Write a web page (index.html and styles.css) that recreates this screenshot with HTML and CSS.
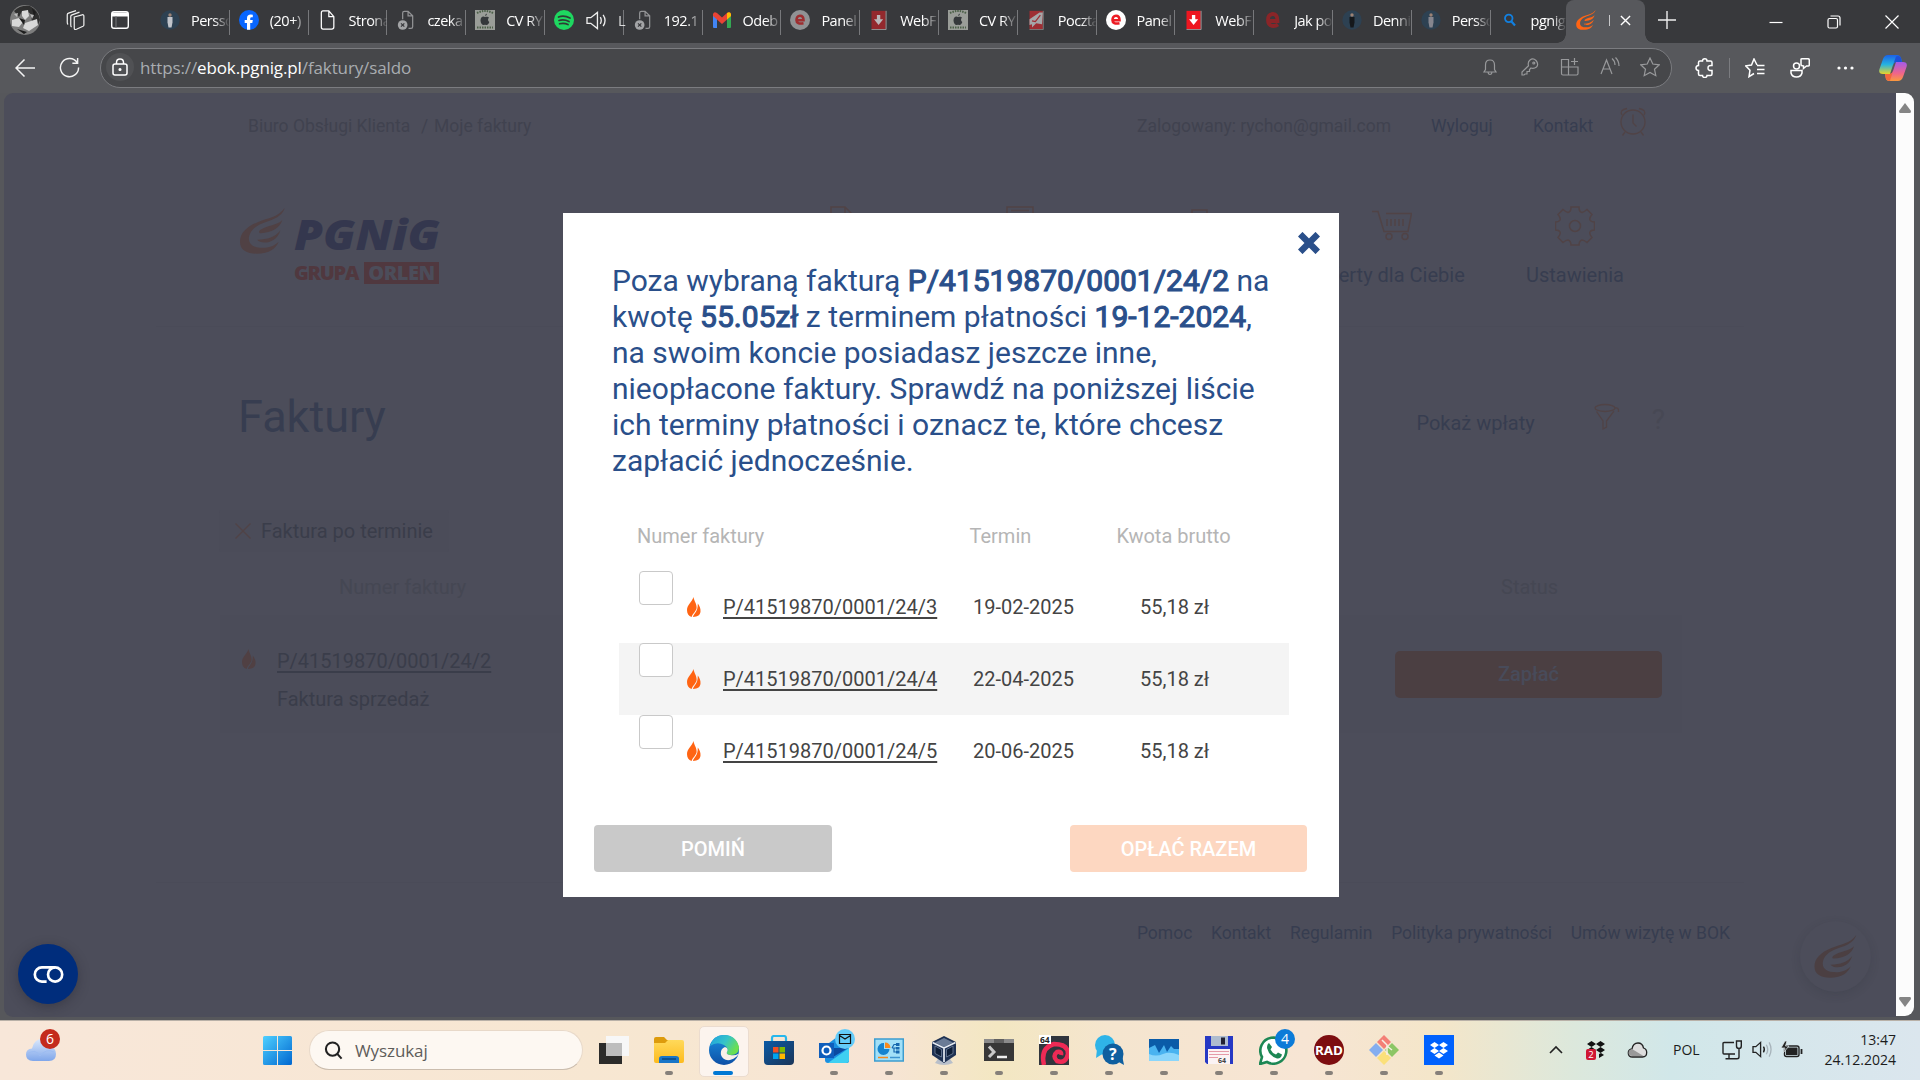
FILE: index.html
```html
<!DOCTYPE html>
<html lang="pl">
<head>
<meta charset="utf-8">
<title>PGNiG eBOK - Faktury</title>
<link rel="stylesheet" href="styles.css">
</head>
<body>
<svg class="defs" width="0" height="0">
  <defs>
    <linearGradient id="gWin" x1="0" y1="0" x2="1" y2="1"><stop offset="0" stop-color="#4fd0ff"/><stop offset="1" stop-color="#0067d0"/></linearGradient>
    <linearGradient id="gEdge" x1="0" y1="0" x2="1" y2="0.5"><stop offset="0" stop-color="#1f9fe0"/><stop offset=".55" stop-color="#35c3c9"/><stop offset="1" stop-color="#6be04f"/></linearGradient>
    <linearGradient id="gEdge2" x1="0" y1="0" x2="0" y2="1"><stop offset="0" stop-color="#1b8fe0"/><stop offset="1" stop-color="#0d4fa5"/></linearGradient>
    <linearGradient id="gFold" x1="0" y1="0" x2="0" y2="1"><stop offset="0" stop-color="#ffd95a"/><stop offset="1" stop-color="#fdbb1e"/></linearGradient>
    <linearGradient id="gCopA" x1="0" y1="0" x2="0" y2="1"><stop offset="0" stop-color="#1b62e8"/><stop offset=".5" stop-color="#25b3e0"/><stop offset="1" stop-color="#e8d32a"/></linearGradient>
    <linearGradient id="gCopB" x1="0" y1="0" x2="0" y2="1"><stop offset="0" stop-color="#a25bea"/><stop offset=".6" stop-color="#f0658a"/><stop offset="1" stop-color="#fb9a3c"/></linearGradient>
    <linearGradient id="gCloud" x1="0" y1="0" x2="0" y2="1"><stop offset="0" stop-color="#dbe8fb"/><stop offset="1" stop-color="#7fa6ea"/></linearGradient>
    <linearGradient id="gStore" x1="0" y1="0" x2="1" y2="1"><stop offset="0" stop-color="#0b5aa5"/><stop offset="1" stop-color="#1b3558"/></linearGradient>
    <symbol id="wing" viewBox="0 0 136 139"><path d="M135 0C115 28 85 30 55 42C20 56 0 76 0 102C0 128 22 138 50 138C90 138 108 122 117 102C100 118 80 122 60 120C35 118 25 104 27 88C32 62 55 50 85 40C115 30 130 18 135 0Z"/><path d="M128 36C110 54 85 50 62 66C56 70 56 77 63 76C95 74 120 62 128 36Z"/><path d="M122 68C105 88 85 95 52 96C62 110 110 110 122 68Z"/></symbol>
    <symbol id="drop" viewBox="0 0 14 20"><path d="M6.500 0C7 4 10 7 9.600 11C9.400 14 6 16 4.600 20C1.500 19 0 16.500 0 13C0 8 5 5 6.500 0Z"/><path d="M10.800 6.500C12.500 9 13.800 11 13.500 14.500C13.200 18 11 19.800 6 20C6.500 16.500 11 15.500 10.800 6.500Z"/></symbol>
    <symbol id="blocked" viewBox="0 0 20 24"><path d="M6 11V3.500Q6 1.500 8 1.500H12.500L18 7V20Q18 22 16 22H13M12.500 1.500V7H18" fill="none" stroke="#929395" stroke-width="1.500"/><circle cx="6" cy="18" r="5.800" fill="#a3a4a6"/><path d="M4 16L8 20M8 16L4 20" stroke="#393a3d" stroke-width="1.500"/></symbol>
    <symbol id="apple" viewBox="0 0 20 20"><path fill="#9a9d98" d="M0 0H20V20H0Z"/><path d="M2 3Q10-1 18 3M2 17.500H18" stroke="#4c6048" stroke-width="2" stroke-dasharray="1.500 1" fill="none"/><path d="M10 7C8 5.500 5.500 7 5.500 10.500C5.500 13 7.500 15.500 9 15C10 14.600 10 14.600 11 15C12.500 15.500 14 13.500 14.300 12C12.500 11 12.800 8.500 14 7.800C13 6.300 11.500 6.500 10 7ZM10 6Q10 4 12 3.500Q12 5.500 10 6Z" fill="#35383b"/></symbol>
    <symbol id="download" viewBox="0 0 20 24"><path fill="currentColor" d="M1 1H18V23H1Z"/><path d="M18.500 1V23.500H1" stroke="#aaa" fill="none"/><path d="M7.500 6H11.500V11H15L9.500 18L4 11H7.500Z" fill="var(--ar)"/></symbol>
    <symbol id="person" viewBox="0 0 20 20"><circle cx="10" cy="10" r="9.700" fill="#2d4152"/><circle cx="10" cy="5" r="1.700" fill="#9b8275"/><path d="M7.500 7H12.500V12.500L11.500 17.500H8.500L7.500 12.500Z" fill="var(--ps)"/></symbol>
  </defs>
</svg>
<div class="desktop">
  <header class="tabstrip">
    <svg class="avatar" viewBox="0 0 30 30"><circle cx="15" cy="15" r="15" fill="#7d7d7d"/><path d="M4 6Q10 0 20 1Q29 6 30 15L28 20L22 16L20 8L12 6L9 12Z" fill="#2f2f2f"/><path d="M12 6L18 5L19 11L15 15L12 11ZM2 15L9 13L13 17L9 22L2 21ZM15 18L27 14L28 20L19 26L13 23Z" fill="#d8d8d8"/><path d="M9 13L15 15L14 20ZM7 24L17 27L14 29ZM22 3L26 7L24 12Z" fill="#1d1d1d"/><path d="M20 9L24 10L22 14ZM4 9L8 8L7 12Z" fill="#bbb"/></svg>
    <svg class="workspaces" viewBox="0 0 22 24" fill="none" stroke="#eee" stroke-width="1.400"><path d="M9 8L18 5.500Q20 5 20 7V17Q20 18 19 18.500L11.500 22Q9 23 9 20.500Z"/><path d="M6 19.500Q5 19 5 17V7.500Q5 6 6.500 5.500L15 2.500M2 16.500Q1 16 1 14V5.500Q1 4 2.500 3.500L11 .8"/></svg>
    <svg class="vtabs" viewBox="0 0 18 18"><path d="M3 .7H15Q17.300 .7 17.300 3V15Q17.300 17.300 15 17.300H3Q.7 17.300 .7 15V3Q.7 .7 3 .7Z" fill="none" stroke="#fff" stroke-width="1.400"/><path d="M1 1.500H17V5.500H1Z" fill="#fff"/><path d="M5 5V17" stroke="#77787b"/></svg>
    <nav class="tabs">
      <div class="tab"><svg class="fav" style="--ps:#c0c4cb"><use href="#person"/></svg><span>Persso</span></div>
      <div class="tab"><svg class="fav" viewBox="0 0 20 20"><circle cx="10" cy="10" r="10" fill="#0866ff"/><path d="M8 19.800V13H5.700V10H8V8Q8 4.500 11.800 4.500L13.800 4.700V7.300H12.600Q11.200 7.300 11.200 8.600V10H13.800L13.300 13H11.200V19.800Z" fill="#fff"/></svg><span>(20+)</span></div>
      <div class="tab"><svg class="fav" viewBox="0 0 20 24"><path d="M4 1H11L17 8V20.500Q17 23 14.500 23H4Q2 23 2 20.500V3.500Q2 1 4 1ZM11 1V8H17" fill="none" stroke="#fff" stroke-width="1.500"/></svg><span>Strona</span></div>
      <div class="tab"><svg class="fav"><use href="#blocked"/></svg><span>czeka</span></div>
      <div class="tab"><svg class="fav"><use href="#apple"/></svg><span>CV RY</span></div>
      <div class="tab"><svg class="fav" viewBox="0 0 20 20"><circle cx="10" cy="10" r="10" fill="#1ed760"/><path d="M4.500 7Q10 5 16 8M5 10.500Q10 9 15 11.500M5.500 13.800Q10 12.500 14 14.500" stroke="#2e3b34" stroke-width="1.700" fill="none" stroke-linecap="round"/></svg><svg class="speaker" viewBox="0 0 22 20" fill="none" stroke="#eee" stroke-width="1.400"><path d="M1 7H5L12 1.500V18.500L5 13H1ZM15 6.500Q17 10 15 13.500M18 4Q22 10 18 16"/></svg><span>L</span></div>
      <div class="tab"><svg class="fav"><use href="#blocked"/></svg><span>192.1</span></div>
      <div class="tab"><svg class="fav" viewBox="0 0 20 20"><path d="M1 4H5V18H2Q1 18 1 17Z" fill="#4285f4"/><path d="M15 4H19V17Q19 18 18 18H15Z" fill="#34a853"/><path d="M1 4Q2 1 5 3L10 7.500L15 3Q18 1 19 4L19 6L10 14L1 6Z" fill="#ea4335"/><path d="M15 3Q18 1 19 4V6L15 9.500Z" fill="#fbbc04"/></svg><span>Odeb</span></div>
      <div class="tab"><svg class="fav" viewBox="0 0 20 20"><circle cx="10" cy="10" r="10" fill="#919294"/><path d="M6.500 10.300H13.500Q13.500 5.800 10 5.800Q6.500 5.800 6.500 10.300Q6.500 14.500 13.500 13.300" fill="none" stroke="#9e2e30" stroke-width="2.600"/></svg><span>Panel</span></div>
      <div class="tab"><svg class="fav red-dim"><use href="#download"/></svg><span>WebF</span></div>
      <div class="tab"><svg class="fav"><use href="#apple"/></svg><span>CV RY</span></div>
      <div class="tab"><svg class="fav" viewBox="0 0 20 24"><path d="M1 1H17V23H1Z" fill="#9e2e33"/><path d="M17.500 1V23.500H1" stroke="#888" fill="none"/><path d="M1 11L13 3H17L16 17L9 16L4 21V17L1 18Z" fill="#a5a6a8"/><path d="M4 13L8 14L14 6" stroke="#9e2e33" stroke-width="1.500" fill="none"/></svg><span>Poczta</span></div>
      <div class="tab"><svg class="fav" viewBox="0 0 20 20"><circle cx="10" cy="10" r="10" fill="#fff"/><path d="M6.500 10.300H13.500Q13.500 5.800 10 5.800Q6.500 5.800 6.500 10.300Q6.500 14.500 13.500 13.300" fill="none" stroke="#ed1c24" stroke-width="2.600"/></svg><span>Panel</span></div>
      <div class="tab"><svg class="fav red"><use href="#download"/></svg><span>WebF</span></div>
      <div class="tab"><svg class="fav" viewBox="0 0 20 20"><path d="M5 11H14.500Q14.500 4 10 4Q5 4 5 10Q5 16 10.500 16Q13 16 15 14.500" fill="none" stroke="#8a2528" stroke-width="3.800"/></svg><span>Jak po</span></div>
      <div class="tab"><svg class="fav" style="--ps:#15181b"><use href="#person"/></svg><span>Denni</span></div>
      <div class="tab"><svg class="fav" style="--ps:#85868f"><use href="#person"/></svg><span>Persso</span></div>
      <div class="tab tab--last"><svg class="fav" viewBox="0 0 20 24" fill="none" stroke="#1280e0"><circle cx="8.500" cy="10" r="4.500" stroke-width="2.200"/><path d="M11.500 13.500L16 18.500" stroke-width="2.600"/></svg><span>pgnig</span></div>
      <div class="tab tab--active"><svg class="fav orange"><use href="#wing"/></svg><b></b><svg class="tabx" viewBox="0 0 12 12" stroke="#fff" stroke-width="1.500"><path d="M1 1L11 11M11 1L1 11"/></svg></div>
    </nav>
    <svg class="plus" viewBox="0 0 18 18" stroke="#eee" stroke-width="1.400"><path d="M9 0V18M0 9H18"/></svg>
    <div class="winbtns">
      <svg viewBox="0 0 14 14" fill="none" stroke="#fff" stroke-width="1.200"><path d="M.5 7.500H13.500"/></svg>
      <svg viewBox="0 0 14 14" fill="none" stroke="#fff" stroke-width="1.200"><path d="M1 5Q1 3.500 2.500 3.500H9Q10.500 3.500 10.500 5V11.500Q10.500 13 9 13H2.500Q1 13 1 11.500ZM3.500 1H11Q13 1 13 3V10.500"/></svg>
      <svg viewBox="0 0 14 14" fill="none" stroke="#fff" stroke-width="1.200"><path d="M.5 .5L13.500 13.500M13.500 .5L.5 13.500"/></svg>
    </div>
  </header>

  <div class="toolbar">
    <svg class="back" viewBox="0 0 20 18" fill="none" stroke="#f4f4f4" stroke-width="1.500"><path d="M20 9H1M9.500 .5L1 9L9.500 17.500"/></svg>
    <svg class="reload" viewBox="0 0 22 22" fill="none" stroke="#f4f4f4" stroke-width="1.500"><path d="M19 6A9.500 9.500 0 1 0 20.500 11M19.500 1V6.500H14"/></svg>
    <div class="urlbar">
      <div class="lock"><svg viewBox="0 0 16 18" fill="none" stroke="#fff" stroke-width="1.500"><rect x="1" y="6" width="14" height="11" rx="2"/><path d="M4.500 6V4.500Q4.500 1 8 1Q11.500 1 11.500 4.500V6"/><circle cx="8" cy="11.500" r=".8" fill="#fff"/></svg></div>
      <div class="url">https://<b>ebok.pgnig.pl</b>/faktury/saldo</div>
      <div class="urlicons">
        <svg viewBox="0 0 20 20"><path d="M4 15H16L14.500 12.500V8Q14.500 3 10 3Q5.500 3 5.500 8V12.500ZM8 15.500Q8.500 17.500 10 17.500Q11.500 17.500 12 15.500"/></svg>
        <svg viewBox="0 0 20 20"><path d="M2 18V15L8.500 8.800Q7.500 5 10 3Q13 .5 16 3.500Q19 7 16.500 10Q14 12 11 11L9.500 12.500V14.500H7V17H5L4 18Z"/><circle cx="13.800" cy="6" r="1"/></svg>
        <svg viewBox="0 0 20 20"><path d="M1.500 2.500H8.500V18H3Q1.500 18 1.500 16.500ZM1.500 10H18V16.500Q18 18 16.500 18H8.500M14.500 1V8M11 4.500H18"/></svg>
        <svg viewBox="0 0 20 20"><path d="M1 17L6.500 3L12 17M3 12H10M12 1.500Q15 4 15 8M15.500 .5Q19 4 19 9"/></svg>
        <svg viewBox="0 0 20 20"><path d="M10 1L12.800 7L19.300 7.800L14.500 12.200L15.800 18.700L10 15.500L4.200 18.700L5.500 12.200L.7 7.800L7.200 7Z"/></svg>
      </div>
    </div>
    <svg class="tool ext" viewBox="0 0 20 20"><path d="M7.500 3Q7.500 .8 9.800 .8Q12 .8 12 3H15.500Q17 3 17 4.500V7.500Q13 7 13 10Q13 13 17 12.500V16Q17 17.500 15.500 17.500H12Q12 19.500 9.800 19.500Q7.500 19.500 7.500 17.500H5Q3.500 17.500 3.500 16V12.500Q1 12.300 1 10Q1 7.700 3.500 7.500V4.500Q3.500 3 5 3Z"/></svg>
    <i class="vsep"></i>
    <svg class="tool favs" viewBox="0 0 20 20"><path d="M12 7L9 1L6.500 7L.7 7.800L5 12.200L4 18.700L9 15.500M12 7.500H19.500M12 11.500H19.500M12 15.500H19.500"/></svg>
    <svg class="tool ppl" viewBox="0 0 20 20"><circle cx="6.500" cy="8" r="3"/><path d="M1 12.500H12V15Q11 19 6.500 19Q2 19 1 15ZM11 1.500Q11 .8 12 .8H18Q19.300 .8 19.300 2V7Q19.300 8 18 8H16.500L13.500 10.500V8Q11 8 11 6.500Z"/></svg>
    <svg class="dots" viewBox="0 0 20 20"><circle cx="2" cy="10" r="1.600"/><circle cx="8.500" cy="10" r="1.600"/><circle cx="15" cy="10" r="1.600"/></svg>
    <svg class="copilot" viewBox="0 0 28 26"><path d="M9 0H18Q21 0 22 3L23 7H17Q15 7 14 10L11 19H4Q-1 19 .5 14L4 4Q5.500 0 9 0Z" fill="url(#gCopA)"/><path d="M19 26H10Q7 26 6.500 22L6 19H11Q13 19 14 16L17 7H24Q29 7 27.500 12L24 22Q22.500 26 19 26Z" fill="url(#gCopB)"/><path d="M14 10L17 1.500Q21 0 22 3L23 7H17Q15 7 14 10Z" fill="#1c50d8"/><path d="M14 16L11 25.800Q7 26 6.500 22L6 19H11Q13 19 14 16Z" fill="#f2663c"/></svg>
  </div>

  <div class="view">
    <main class="page">
      <div class="topbar">
        <span class="crumb1">Biuro Obsługi Klienta</span><span class="crumbsep">/</span><span>Moje faktury</span>
        <span class="user">Zalogowany: rychon@gmail.com</span>
        <a class="logout">Wyloguj</a><a class="contact">Kontakt</a>
        <svg class="clock" viewBox="0 0 28 30"><circle cx="14" cy="15" r="12"/><path d="M14 7.500V16L17.500 19.500M3 8Q0 3 8 1.500M25 8Q28 3 20 1.500M6 25L3.500 28.500M22 25L24.500 28.500"/></svg>
      </div>
      <div class="header">
        <div class="logo">
          <svg class="logowing"><use href="#wing"/></svg>
          <div class="logotext"><svg class="pgnig" viewBox="0 0 150 53"><text x="1" y="40.500" textLength="146" lengthAdjust="spacingAndGlyphs">PGNiG</text></svg><div class="grupa"><span>GRUPA</span><b>ORLEN</b></div></div>
        </div>
        <nav class="mainnav">
          <a><svg viewBox="0 0 40 40"><path d="M11 1H25L33 9V38H11ZM25 1V9H33"/></svg></a>
          <a><svg viewBox="0 0 40 40"><path d="M7 1H33V38H7ZM11 4.500H29"/></svg></a>
          <a><svg viewBox="0 0 40 40"><path d="M12 4H27V38H12Z"/></svg></a>
          <a><svg viewBox="0 0 40 40"><path d="M0 5.500H6L12 25.500H36L39.500 7.500H14M15 13V20M19 13V20M23 13V20M27 13V20M31 13V20"/><circle cx="17" cy="30.500" r="3"/><circle cx="33" cy="30.500" r="3"/></svg><span>Oferty dla Ciebie</span></a>
          <a><svg viewBox="0 0 40 40"><path d="M16 1H24Q24 6 27 6.500Q29 6 32 3.500L37 8.500Q34 12 35 14Q36 16 39.500 16V24Q36 24 35 26Q34 28 37 31.500L32 36.500Q29 34 27 34Q24 35 24 39H16Q16 35 13 34Q11 34 8 36.500L3 31.500Q6 28 5 26Q4 24 .5 24V16Q4 16 5 14Q6 12 3 8.500L8 3.500Q11 6 13 6.500Q16 6 16 1Z"/><circle cx="20" cy="20" r="5.500"/></svg><span>Ustawienia</span></a>
        </nav>
      </div>
      <div class="titlebar">
        <h1>Faktury</h1>
        <a class="payments">Pokaż wpłaty</a>
        <svg class="funnel" viewBox="0 0 26 28"><ellipse cx="11" cy="5" rx="10" ry="3.500"/><path d="M2.500 8.500L9 18V26L12.500 24V18L20 8M21 5Q25 4 24.500 9"/></svg>
        <span class="help">?</span>
      </div>
      <div class="chip"><svg viewBox="0 0 16 16"><path d="M.5 .5L15.500 15.500M15.500 .5L.5 15.500"/></svg>Faktura po terminie</div>
      <div class="listhead"><span>Numer faktury</span><span>Status</span></div>
      <div class="listrow">
        <svg class="dimdrop"><use href="#drop"/></svg>
        <div class="inv"><u>P/41519870/0001/24/2</u><span>Faktura sprzedaż</span></div>
        <div class="pay">Zapłać</div>
      </div>
      <footer><a>Pomoc</a><a>Kontakt</a><a>Regulamin</a><a>Polityka prywatności</a><a>Umów wizytę w BOK</a></footer>

      <div class="chat"><svg><use href="#wing"/></svg></div>
      <div class="cookie"><svg viewBox="0 0 32 18" fill="none" stroke="#fff" stroke-width="2.800"><path d="M14 16.500H9A7.500 7.500 0 0 1 9 1.500H23"/><circle cx="23" cy="9" r="7.500"/></svg></div>

      <section class="modal">
        <svg class="close" viewBox="0 0 22 22"><path d="M4.500 4.500L17.500 17.500M17.500 4.500L4.500 17.500" stroke="#2a4f8a" stroke-width="6.500" stroke-linecap="square"/></svg>
        <p class="msg">Poza wybraną fakturą <b>P/41519870/0001/24/2</b> na<br>kwotę <b>55.05zł</b> z terminem płatności <b>19-12-2024</b>,<br>na swoim koncie posiadasz jeszcze inne,<br>nieopłacone faktury. Sprawdź na poniższej liście<br>ich terminy płatności i oznacz te, które chcesz<br>zapłacić jednocześnie.</p>
        <div class="thead"><span>Numer faktury</span><span>Termin</span><span>Kwota brutto</span></div>
        <div class="trow"><i class="box"></i><svg><use href="#drop"/></svg><u>P/41519870/0001/24/3</u><span>19-02-2025</span><span>55,18 zł</span></div>
        <div class="trow trow--alt"><i class="box"></i><svg><use href="#drop"/></svg><u>P/41519870/0001/24/4</u><span>22-04-2025</span><span>55,18 zł</span></div>
        <div class="trow"><i class="box"></i><svg><use href="#drop"/></svg><u>P/41519870/0001/24/5</u><span>20-06-2025</span><span>55,18 zł</span></div>
        <div class="actions"><div class="btn skip">POMIŃ</div><div class="btn payall">OPŁAĆ RAZEM</div></div>
      </section>
    </main>
    <div class="scrollbar"><svg viewBox="0 0 12 10"><path d="M6 0L12 8Q12 10 11 10H1Q0 10 0 8Z"/></svg><svg viewBox="0 0 12 10"><path d="M6 10L12 2Q12 0 11 0H1Q0 0 0 2Z"/></svg></div>
  </div>

  <div class="taskbar">
    <div class="weather"><svg viewBox="0 0 30 24"><path d="M7 23Q0 23 0 16.500Q0 11 6 10.500Q8 1 16 1Q23 1 24.500 9Q30 10 30 16Q30 23 23 23Z" fill="url(#gCloud)"/><path d="M1 16Q10 10 14 18Q20 10 28 14" stroke="#9cbcf2" fill="none"/></svg><em>6</em></div>
    <svg class="start" viewBox="0 0 29 29" fill="url(#gWin)"><path d="M1.500 0H14V14H0V1.500Q0 0 1.500 0ZM15 0H27.500Q29 0 29 1.500V14H15ZM0 15H14V29H1.500Q0 29 0 27.500ZM15 15H29V27.500Q29 29 27.500 29H15Z"/></svg>
    <div class="search"><svg viewBox="0 0 20 20" fill="none" stroke="#222" stroke-width="2.200"><circle cx="9" cy="8.500" r="7"/><path d="M14 13.500L18.500 18.500"/></svg><span>Wyszukaj</span></div>
    <div class="apps">
      <div class="app"><svg viewBox="0 0 30 30"><path d="M0 8H23V29H0Z" fill="#2b2b2a"/><path d="M7 1H30V21H7Z" fill="#f7f7f7"/><path d="M7 8H23V21H7Z" fill="#bdbdbd"/></svg></div>
      <div class="app run"><svg viewBox="0 0 30 30"><path d="M0 4Q0 2 2 2H10L13 5H28V12H0Z" fill="#dd9b0c"/><path d="M0 8H11L14 5H28Q30 5 30 7V26Q30 28 28 28H2Q0 28 0 26Z" fill="url(#gFold)"/><path d="M5 28V23.500Q5 21 8 21H22Q25 21 25 23.500V28Z" fill="#1976c8"/><path d="M8 24H22" stroke="#0d5394" stroke-width="2"/></svg></div>
      <div class="app active"><svg viewBox="0 0 30 30"><circle cx="15" cy="15" r="15" fill="url(#gEdge2)"/><path d="M1 11Q4 0 15 0Q27 0 30 12Q30 20 22 20Q17 20 18 17Q20 13 15 10Q8 6 1 11Z" fill="url(#gEdge)"/><path d="M18 17Q20 13 16 12Q11 14 12 20Q14 26 21 25Q25 24 27 22Q31 18 29 19Q26 21 21 20Q17 19.500 18 17Z" fill="#f9f0e8"/></svg></div>
      <div class="app"><svg viewBox="0 0 30 30"><path d="M8 8V3Q8 1 10 1H20Q22 1 22 3V8" fill="none" stroke="#27b7ec" stroke-width="2.200"/><path d="M0 6H30V26Q30 30 26 30H4Q0 30 0 26Z" fill="url(#gStore)"/><path d="M9 12H14.500V17.500H9Z" fill="#f25022"/><path d="M15.500 12H21V17.500H15.500Z" fill="#7fba00"/><path d="M9 18.500H14.500V24H9Z" fill="#00a4ef"/><path d="M15.500 18.500H21V24H15.500Z" fill="#ffb900"/></svg></div>
      <div class="app run"><svg viewBox="0 0 30 30"><path d="M6 11L18 2L30 11V26Q30 28 27 28H9Q6 28 6 25Z" fill="#1b8fe0"/><path d="M9 28L30 13V25Q30 28 27 28Z" fill="#3fd0f2"/><path d="M14 13H29L14 22Z" fill="#0b4aa0"/><path d="M0 8H15V23H0Z" fill="#0f5dbb"/><circle cx="7.500" cy="15.500" r="4" fill="none" stroke="#fff" stroke-width="2.200"/></svg><svg class="badge" viewBox="0 0 20 20"><circle cx="10" cy="10" r="10" fill="#63cbf9"/><path d="M4.500 5.500H15.500V14.500H4.500ZM4.500 6.500L10 10L15.500 6.500" fill="none" stroke="#111" stroke-width="1.200"/></svg></div>
      <div class="app run"><svg viewBox="0 0 30 30"><path d="M.7 4H29.300V26H.7Z" fill="#a2e0f8" stroke="#3c9ccf" stroke-width="1.500"/><path d="M10 8A6 6 0 1 0 15.500 14H10Z" fill="#1583cf"/><path d="M11 7.500Q16 7.500 16.500 13H11Z" fill="#f78a1d"/><path d="M18 13L20 9.500H22M18 13H22M20 13V17H22" stroke="#1768b0" stroke-width="1.200" fill="none"/><path d="M22 8H25.500V11H22ZM22 12H25.500V14.500H22ZM22 15.500H25.500V18.500H22Z" fill="#1768b0"/><path d="M4 22.500H14" stroke="#f78a1d" stroke-width="1.500"/><path d="M16 22.500H26" stroke="#3d94d0" stroke-width="1.500"/></svg></div>
      <div class="app run"><svg viewBox="0 0 30 30"><path d="M9 24H21L24 28Q15 32 6 28Z" fill="#b8bfca"/><path d="M15 1L27 7V20L15 28L3 20V7Z" fill="#1e3153"/><path d="M15 3L24 7.500L15 12L6 7.500Z" fill="#6a7b96"/><path d="M3.500 7.500L15 13V27M15 13L26.500 7.500" stroke="#e5eaf2" stroke-width="1.700" fill="none"/><path d="M6 11L12.500 14.500V22L6 18.500ZM24 11L17.500 14.500V22L24 18.500Z" fill="#0e1e38" stroke="#8090aa" stroke-width=".7"/></svg></div>
      <div class="app run"><svg viewBox="0 0 30 30"><path d="M0 4H30V26H0Z" fill="#373737"/><path d="M0 4H30V8H0Z" fill="#8b8b8b"/><path d="M10 4H20V8H10Z" fill="#606060"/><path d="M5 11.500L10 17L5 22" stroke="#c9c9c9" stroke-width="3" fill="none"/><path d="M13 22H23" stroke="#eee" stroke-width="2.500"/></svg></div>
      <div class="app run"><svg viewBox="0 0 30 30"><path d="M0 1H30V30H0Z" fill="#30353d"/><path d="M5 30Q1 13 15 9Q29 9 29 19Q27 29 18 26Q13 21 18 17Q23 16 22 20" fill="none" stroke="#ee2a55" stroke-width="4.500"/><path d="M0 0H12V9H0Z" fill="#fff"/><text x="1" y="8" font-size="8.500" font-weight="700" fill="#222">64</text></svg></div>
      <div class="app run"><svg viewBox="0 0 30 30"><circle cx="11" cy="10" r="10" fill="#2fb4e8"/><path d="M3 14L2 23L10 18Z" fill="#2fb4e8"/><circle cx="19" cy="19" r="10.500" fill="#0f5f9f"/><path d="M23 26L30 30L28 20Z" fill="#0f5f9f"/><text x="15" y="24.500" font-size="16" font-weight="700" fill="#fff">?</text></svg></div>
      <div class="app run"><svg viewBox="0 0 30 30"><path d="M0 4H30V26H0Z" fill="#0a5ba8"/><path d="M0 13L6 10L10 18L15 10L18 17L22 11L25 14H30V26H0Z" fill="#49b3f0"/><path d="M0 19Q7 22 14 19T30 20V26H0Z" fill="#8bd6fb"/></svg></div>
      <div class="app run"><svg viewBox="0 0 30 30"><path d="M1 1H29V29H3L1 27Z" fill="#2638c4"/><path d="M7 1H24V11H7Z" fill="#aebccf"/><path d="M17 2.500H21V9.500H17Z" fill="#223"/><path d="M4 14H26V29H4Z" fill="#fbf3f4"/><path d="M5 16.500H25M5 19.500H25M5 22.500H14" stroke="#e59aa8"/><text x="14" y="27.500" font-size="7" font-weight="700" fill="#444">64</text></svg></div>
      <div class="app run"><svg viewBox="0 0 30 30"><path d="M1 29L3 22A13 13 0 1 1 8 27Z" fill="#fff" stroke="#1c8754" stroke-width="2.600"/><path d="M10 8L13 12L11.500 14.500Q13 18 17 19.500L19 17.500L23 19.500Q22 24 18 23.500Q10 21 8 13Q8 9 10 8Z" fill="#1c8754"/></svg><svg class="badge" viewBox="0 0 20 20"><circle cx="10" cy="10" r="10" fill="#0b7bd8"/><text x="6" y="15" font-size="14" fill="#fff">4</text></svg></div>
      <div class="app run"><svg viewBox="0 0 30 30"><circle cx="15" cy="15" r="15" fill="#7d0d10"/><text x="1" y="20" font-size="13" font-weight="700" fill="#fff" textLength="28" lengthAdjust="spacingAndGlyphs">RAD</text></svg></div>
      <div class="app run"><svg viewBox="0 0 30 30"><path d="M15 0L22 7L15 14L8 7Z" fill="#f47f76"/><path d="M7 8L14 15L7 22L0 15Z" fill="#84aef0"/><path d="M23 8L30 15L23 22L16 15Z" fill="#8cc665"/><path d="M15 16L22 23L15 30L8 23Z" fill="#fbe07a"/><path d="M13 5L18 10V20M18 11L23 15" stroke="#f7efe3" stroke-width="1.500" fill="none"/></svg></div>
      <div class="app run"><svg viewBox="0 0 30 30"><path d="M0 0H30V30H0Z" fill="#0061fe"/><path d="M10.500 7L15 10L10.500 13L6 10ZM19.500 7L24 10L19.500 13L15 10ZM10.500 13L15 16L10.500 19L6 16ZM19.500 13L24 16L19.500 19L15 16ZM15 17.500L19.500 20.500L15 23.500L10.500 20.500Z" fill="#fff"/></svg></div>
    </div>
    <div class="tray">
      <svg class="chev" viewBox="0 0 14 10" fill="none" stroke="#222" stroke-width="1.600"><path d="M1 8L7 2L13 8"/></svg>
      <svg class="dbx" viewBox="0 0 20 20"><path d="M5.500 1L10 4L5.500 7L1 4ZM14.500 1L19 4L14.500 7L10 4ZM5.500 7L10 10L5.500 13L1 10ZM14.500 7L19 10L14.500 13L10 10ZM15 13L18 15L13 18V14Z" fill="#111"/><rect y="9" width="10" height="11" rx="2" fill="#d01734"/><text x="2.300" y="18" font-size="9.500" fill="#fff">2</text></svg>
      <svg class="od" viewBox="0 0 20 16"><path d="M5 15Q.8 15 .8 11Q.8 7.500 4.500 7Q5.500 1 10.500 1Q15 1 16 6Q19.200 7 19.200 10.500Q19.200 15 15 15Z" fill="#ddd" stroke="#222" stroke-width="1.300"/><path d="M4.500 7L16 14H5Q1 14 1 11Q1 7.500 4.500 7Z" fill="#999"/></svg>
      <span class="lang">POL</span>
      <svg class="net" viewBox="0 0 20 20" fill="none" stroke="#222" stroke-width="1.400"><path d="M12 2.500H2Q1 2.500 1 3.500V13Q1 14 2 14H13M7 14V18.500M3.500 18.800H15Q17 18.800 17 17V9M14.500 1H19.300V6Q19.300 8.500 17 8.500Q14.500 8.500 14.500 6Z"/></svg>
      <svg class="vol" viewBox="0 0 22 20" fill="none" stroke="#222" stroke-width="1.400"><path d="M1 7H4L9 2.500V17.500L4 13H1ZM12 7Q14 10 12 13"/><path d="M15 5Q18 10 15 15M18 2.500Q22 10 18 17.500" stroke="#a8b4bb"/></svg>
      <svg class="bat" viewBox="0 0 22 18"><rect x="3.500" y="5" width="14.500" height="10.500" rx="2" fill="none" stroke="#222" stroke-width="1.400"/><path d="M5 6.500H16.500V14H5Z" fill="#222"/><path d="M20.500 8V13" stroke="#222" stroke-width="1.800"/><path d="M4 0L0 7H4L2 12L8 5H4.500L6 0Z" fill="#222" stroke="#dce6e8" stroke-width=".8"/></svg>
      <div class="time"><span>13:47</span><span>24.12.2024</span></div>
    </div>
  </div>
</div>
</body>
</html>
```
FILE: styles.css
```css
* { box-sizing: border-box; }
body { margin: 0; overflow: hidden; font-family: "Open Sans", "Noto Sans", sans-serif; }
svg { display: block; flex: none; }
.defs { position: absolute; }
.desktop { width: 1920px; height: 1080px; display: flex; flex-direction: column; background: #56575b; }

/* tab strip */
.tabstrip { height: 43px; flex: none; background: #38393c; display: flex; align-items: center; }
.avatar { width: 30px; height: 30px; margin: -3px 0 0 10px; }
.workspaces { width: 22px; height: 21px; margin: -2px 0 0 25px; }
.vtabs { width: 18px; height: 18px; margin: -3px 0 0 24px; }
.tabs { display: flex; height: 43px; margin-left: 22px; }
.tab { width: 78.8px; display: flex; align-items: center; padding: 0 0 3px 9px; color: #fff; font-size: 14.500px; letter-spacing: -0.5px; white-space: nowrap; background: linear-gradient(#77787b, #77787b) right 10px / 1px 25px no-repeat; }
.tab span { width: 38px; margin-left: 11px; -webkit-mask-image: linear-gradient(90deg, #000 60%, transparent 102%); mask-image: linear-gradient(90deg, #000 60%, transparent 102%); }
.tab .speaker + span { width: 8px; -webkit-mask-image: none; mask-image: none; opacity: .8; }
.fav { width: 20px; height: 20px; }
.speaker { width: 21px; height: 19px; margin-left: 12px; }
.red-dim { color: #93292d; --ar: #b9b9bb; }
.red { color: #ee1620; --ar: #fff; }
.orange { fill: #ff6413; }
.tab--last { width: 75.6px; background: none; }
.tab--active { width: 79px; background: #57585c; border-radius: 8px 8px 0 0; position: relative; padding-left: 10px; }
.tab--active::before, .tab--active::after { content: ""; position: absolute; bottom: 0; width: 9px; height: 9px; }
.tab--active::before { left: -9px; background: radial-gradient(circle at 0 0, transparent 8.500px, #57585c 9px); }
.tab--active::after { right: -9px; background: radial-gradient(circle at 100% 0, transparent 8.500px, #57585c 9px); }
.tab--active b { width: 1px; height: 11px; background: #c8c8ca; margin: 0 10px 0 13px; }
.tabx { width: 11px; height: 11px; margin-top: 1px; }
.plus { width: 18px; height: 18px; margin: -4px 0 0 13px; }
.winbtns { display: flex; gap: 44px; margin-left: 93px; }
.winbtns svg { width: 14px; height: 14px; }

/* address bar */
.toolbar { height: 50px; flex: none; display: flex; align-items: center; background: #57585c; }
.back { width: 20px; height: 18px; margin-left: 15px; margin-top: -1px; }
.reload { width: 21px; height: 21px; margin-left: 24px; margin-top: -1px; }
.urlbar { width: 1572px; height: 40px; margin-left: 20px; border: 1px solid #7b7c80; border-radius: 20px; background: #46474a; display: flex; align-items: center; padding: 0 11px 2px 5px; }
.lock { width: 28px; height: 28px; border-radius: 50%; background: #505154; display: flex; align-items: center; justify-content: center; }
.lock svg { width: 16px; height: 18px; }
.url { margin-left: 6px; font-size: 17px; letter-spacing: -.12px; color: #a9adb1; white-space: nowrap; }
.url b { font-weight: 400; color: #fff; }
.urlicons { display: flex; gap: 20px; margin-left: auto; }
.urlicons svg { width: 20px; height: 20px; fill: none; stroke: #98999b; stroke-width: 1.200; }
.tool { width: 20px; height: 20px; fill: none; stroke: #fff; stroke-width: 1.500; }
.ext { margin-left: 23px; }
.vsep { width: 1px; height: 20px; background: #7b7c80; margin: 0 15px 0 14px; }
.ppl { margin-left: 25px; }
.dots { width: 20px; height: 20px; margin-left: 27px; fill: #fff; }
.copilot { width: 28px; height: 26px; margin-left: 22px; }

/* page */
.view { height: 924px; flex: none; display: flex; padding-left: 4px; padding-right: 6px; }
.page { flex: 1; position: relative; background: #4c4d5a; border-radius: 9px 0 0 9px; font-family: Roboto, sans-serif; font-size: 20px; color: #3a3d4a; white-space: nowrap; }
.topbar { height: 66px; display: flex; align-items: center; padding-left: 244px; font-size: 17.500px; color: #40424f; }
.crumb1 { width: 173px; }
.crumbsep { width: 13px; }
.user { margin-left: auto; margin-right: 40px; }
.logout, .contact, .payments, footer a, .mainnav span { color: #373d50; }
.logout { width: 102px; }
.contact { width: 86px; }
.clock { width: 28px; height: 30px; margin: -9px 249px 0 0; }
.clock, .mainnav svg, .funnel, .chip svg { fill: none; stroke: #504346; stroke-width: 1.300; }
.header { height: 168px; margin: 0 152px; border-bottom: 1px solid #4a4b58; display: flex; padding: 47px 79px 0 84px; }
.logo { display: flex; height: 80px; }
.logowing { width: 45px; height: 46px; fill: #504144; margin-top: 2px; }
.logotext { margin-left: 8px; }
.pgnig { width: 150px; height: 53px; margin-top: 3px; margin-right: -4px; fill: #34374e; font: italic 800 43px "Open Sans", sans-serif; }
.grupa { display: flex; align-items: center; height: 22px; margin-left: 1px; font: 800 20px/22px "Open Sans", sans-serif; color: #50383f; }
.grupa span { width: 70px; letter-spacing: -1.300px; }
.grupa b { width: 75px; height: 22px; background: #50383f; color: #4c4d5a; text-align: center; font-weight: 800; letter-spacing: -.5px; }
.mainnav { display: flex; margin-left: auto; }
.mainnav a { display: flex; flex-direction: column; align-items: center; width: 180px; }
.mainnav a:nth-child(4) { width: 187px; margin-left: 8px; }
.mainnav svg { width: 40px; height: 40px; stroke-width: 1.500; }
.mainnav span { margin-top: 17px; line-height: 24px; }
.titlebar { height: 93px; margin-top: 43px; display: flex; align-items: center; padding-left: 234px; }
h1 { margin: 0; font-weight: 400; font-size: 45px; color: #373d50; }
.payments { margin-left: auto; margin-top: 12px; }
.funnel { width: 26px; height: 28px; margin-left: 59px; }
.help { margin: 6px 231px 0 32px; font-size: 28px; color: #474854; }
.chip { width: 230px; height: 42px; margin: 47px 0 0 215px; padding-left: 16px; display: flex; align-items: center; gap: 10px; border-radius: 3px; background: #4b4c59; }
.chip svg { width: 16px; height: 16px; }
.listhead { height: 63px; padding: 23px 0 0 335px; line-height: 24px; display: flex; color: #454753; }
.listhead span:first-child { width: 1162px; }
.listrow { height: 118px; margin: 0 214px 0 216px; background: #4b4c59; display: flex; align-items: flex-start; padding: 1px 20px 0 22px; }
.dimdrop { width: 14px; height: 20px; fill: #504043; margin-top: 33px; }
.inv { display: flex; flex-direction: column; margin: 26px 0 0 21px; line-height: 38px; }
u { text-underline-offset: 3px; text-decoration-thickness: 2px; }
.pay { width: 267px; height: 47px; margin: 35px 0 0 auto; background: #4b3f42; border-radius: 5px; color: #484b5a; font-weight: 500; line-height: 47px; text-align: center; }
footer { margin: 149px 152px 0; border-top: 1px solid #4a4b58; padding: 39px 14px 0 0; display: flex; justify-content: flex-end; gap: 18.700px; font-size: 17.500px; line-height: 22px; }
.chat { position: absolute; left: 1796px; top: 828px; width: 71px; height: 71px; border-radius: 50%; background: #4c4d5a; box-shadow: 0 3px 10px rgba(40, 41, 52, .16); display: flex; align-items: center; justify-content: center; }
.chat svg { width: 43px; height: 43px; fill: #4b3f42; }
.cookie { position: absolute; left: 14px; top: 851px; width: 60px; height: 60px; border-radius: 50%; background: #002d7c; box-shadow: 0 3px 12px rgba(30, 30, 40, .35); display: flex; align-items: center; justify-content: center; }
.cookie svg { width: 31px; height: 17px; }

/* modal */
.modal { position: absolute; left: 559px; top: 120px; width: 776px; height: 684px; background: #fff; padding: 50px 32px 25px 31px; color: #444; }
.close { position: absolute; left: 735px; top: 19px; width: 22px; height: 22px; }
.msg { margin: 0 0 45px 18px; font-size: 30px; line-height: 36px; color: #2a4f8a; }
.msg b { font-weight: 400; -webkit-text-stroke: 1.100px #2a4f8a; }
.thead { display: flex; height: 47px; line-height: 24px; padding-left: 43px; color: #b5b5b5; }
.thead span:nth-child(1) { width: 332.500px; }
.thead span:nth-child(2) { width: 147px; }
.trow { height: 72px; width: 670px; margin-left: 25px; padding-left: 20px; display: flex; align-items: flex-start; line-height: 73px; }
.trow--alt { background: #f4f4f4; }
.box { width: 34px; height: 34px; border: 1px solid #c9c9c9; border-radius: 4px; background: #fff; }
.trow svg { width: 14px; height: 20px; margin: 26px 22px 0 14px; fill: #ff6413; }
.trow u { width: 250px; flex: none; }
.trow u + span { width: 167px; flex: none; }
.actions { display: flex; justify-content: space-between; margin-top: 38px; }
.btn { width: 238px; height: 47px; border-radius: 4px; color: #fff; font-weight: 500; line-height: 48px; text-align: center; }
.skip { background: #c9c9c9; }
.payall { width: 237px; background: #fdd7c1; }

.scrollbar { width: 18px; height: 923px; background: #fcfcfc; border-radius: 0 9px 9px 0; display: flex; flex-direction: column; justify-content: space-between; align-items: center; padding: 10px 0 9px; }
.scrollbar svg { width: 12px; height: 10px; fill: #858585; }

/* taskbar */
.taskbar { height: 60px; margin-top: 3px; flex: none; border-top: 1px solid #b9b1a8; display: flex; align-items: center; position: relative; background: linear-gradient(90deg, #f8e7d9 0, #f7e7d1 35%, #f7e4d5 46%, #f3e7c2 52%, #f5e5cf 58%, #f7e5d4 68%, #f4e6c9 75%, #dce8dc 82%, #d1e7e9 87%, #dbe6ee 100%); }
.weather { width: 30px; height: 24px; margin: -2px 0 0 26px; position: relative; }
.weather svg { width: 30px; height: 24px; }
.weather em { position: absolute; left: 14px; top: -9px; width: 20px; height: 20px; border-radius: 50%; background: #c42b1c; color: #fff; font: 14px/20px "Open Sans", sans-serif; text-align: center; }
.start { width: 29px; height: 29px; margin-left: 207px; }
.search { width: 274px; height: 40px; margin: -1px 0 0 17px; border-radius: 20px; background: #fdf8f2; border: 1px solid #e8d9c9; border-bottom-color: #cbbdae; display: flex; align-items: center; padding-left: 14px; font-size: 17px; letter-spacing: -.1px; color: #5f5d5a; }
.search svg { width: 19px; height: 19px; margin-right: 12px; }
.apps { display: flex; margin: -2px 0 0 3px; }
.app { width: 55px; height: 59px; display: flex; justify-content: center; align-items: center; position: relative; }
.app > svg:first-child { width: 30px; height: 30px; position: relative; z-index: 1; font-family: "Open Sans", sans-serif; }
.app .badge { position: absolute; left: 29px; top: 9px; width: 20px; height: 20px; z-index: 2; }
.run::after { content: ""; position: absolute; left: 24px; bottom: 4px; width: 8px; height: 4px; border-radius: 2px; background: #86807a; }
.active::before { content: ""; position: absolute; left: 3px; top: 6px; width: 48px; height: 49px; border-radius: 5px; background: #fcf4ee; border: 1px solid #ebdccf; }
.active::after { content: ""; position: absolute; left: 17px; bottom: 4px; width: 20px; height: 4px; border-radius: 2px; background: #0078d4; }
.tray { display: flex; align-items: center; margin: -2px 24px 0 auto; color: #1c1c1c; font-size: 14px; }
.chev { width: 14px; height: 10px; margin-right: 23px; }
.dbx { width: 20px; height: 20px; margin-right: 21px; }
.od { width: 21px; height: 16px; margin-right: 25px; }
.lang { width: 27px; margin-right: 22px; }
.net { width: 20px; height: 20px; margin-right: 10px; }
.vol { width: 21px; height: 19px; margin-right: 8px; }
.bat { width: 22px; height: 18px; margin-right: 19px; }
.time { display: flex; flex-direction: column; align-items: flex-end; width: 74px; line-height: 20px; }
```
